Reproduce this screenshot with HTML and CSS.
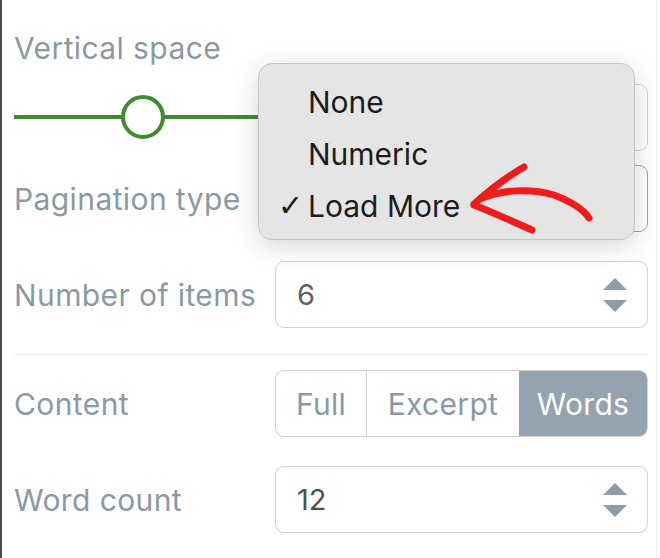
FILE: index.html
```html
<!DOCTYPE html>
<html lang="en">
<head>
    <meta charset="UTF-8">
    <meta name="viewport" content="width=device-width, initial-scale=1.0">
    <title>Post list settings</title>
    <link rel="stylesheet" href="styles.css">
</head>
<body>
    <div class="panel">
        <div class="label topLabel">Vertical space</div>
        <div class="sliderRow">
            <div class="slider">
                <div class="track"></div>
                <div class="thumb"></div>
            </div>
            <div class="box numBox"></div>
        </div>

        <div class="row">
            <div class="label">Pagination type</div>
            <div class="box focused"></div>
        </div>

        <div class="row">
            <div class="label">Number of items</div>
            <div class="box">
                <span class="value light">6</span>
                <span class="spin"><i class="up"></i><i class="down"></i></span>
            </div>
        </div>

        <hr class="divider">

        <div class="row">
            <div class="label">Content</div>
            <div class="segments">
                <span class="seg full">Full</span>
                <span class="seg excerpt">Excerpt</span>
                <span class="seg words active">Words</span>
            </div>
        </div>

        <div class="row">
            <div class="label">Word count</div>
            <div class="box">
                <span class="value">12</span>
                <span class="spin"><i class="up"></i><i class="down"></i></span>
            </div>
        </div>

        <!-- open select menu, over the rows -->
        <ul class="menu">
            <li>None</li>
            <li>Numeric</li>
            <li class="checked"><span class="check">✓</span>Load More</li>
        </ul>

        <svg class="arrow" width="150" height="100" viewBox="0 0 150 100">
            <path d="M72 17 C60 24 42 36 22 54" />
            <path d="M22 55 C40 62 62 72 80 80" />
            <path d="M30 48 C50 40 78 38 102 45 C120 52 132 60 137 68" />
        </svg>
    </div>
</body>
</html>
```

FILE: styles.css
```css
body {
    margin: 0;
    font-family: Inter, "Noto Sans", sans-serif;
    background: #fff;
}
.panel {
    position: relative;
    width: 657px;
    height: 558px;
    box-sizing: border-box;
    border-left: 2px solid #4a4a4a;
    border-right: 1px solid #ececec;
    padding: 32px 8px 0 12px;
    overflow: hidden;
}
.label {
    font-size: 30px;
    line-height: 32px;
    letter-spacing: 0.4px;
    color: #8b98a6;
    white-space: nowrap;
}
.topLabel {
    margin-bottom: 20px;
}
.sliderRow {
    display: flex;
    align-items: center;
    gap: 20px;
    height: 66px;
    margin-bottom: 15px;
}
.slider {
    position: relative;
    flex: 1;
    height: 44px;
    display: flex;
    align-items: center;
}
.track {
    width: 100%;
    height: 4px;
    background: #3f8b30;
}
.thumb {
    position: absolute;
    left: 107px;
    top: 0;
    width: 36px;
    height: 36px;
    border: 4px solid #3f8b30;
    border-radius: 50%;
    background: #fff;
}
.row {
    display: grid;
    grid-template-columns: 261px 1fr;
    align-items: center;
    margin-bottom: 29px;
}
.box {
    height: 67px;
    box-sizing: border-box;
    border: 1.5px solid #d3d3d3;
    border-radius: 9px;
    display: flex;
    align-items: center;
    justify-content: space-between;
    padding: 0 20px 0 21px;
}
.numBox {
    width: 120px;
}
.focused {
    border-color: #9da2a8;
}
.value {
    font-size: 29px;
    color: #4b5057;
}
.value.light {
    color: #5c6168;
}
.spin {
    display: flex;
    flex-direction: column;
    gap: 10px;
}
.spin i {
    display: block;
    width: 0;
    height: 0;
    border-left: 12px solid transparent;
    border-right: 12px solid transparent;
}
.spin .up {
    border-bottom: 12px solid #8d9cab;
}
.spin .down {
    border-top: 12px solid #8d9cab;
}
.divider {
    border: 0;
    border-top: 1.5px solid #eeeeee;
    margin: -3px 0 15px 0;
}
.segments {
    display: flex;
    height: 67px;
    box-sizing: border-box;
    border: 1.5px solid #d3d3d3;
    border-radius: 9px;
    overflow: hidden;
}
.seg {
    display: flex;
    align-items: center;
    justify-content: center;
    font-size: 30px;
    letter-spacing: 0.3px;
    color: #8b98a6;
}
.full {
    width: 90px;
    border-right: 1.5px solid #d3d3d3;
}
.excerpt {
    width: 152px;
}
.words {
    flex: 1;
}
.active {
    background: #95a3b1;
    color: #fff;
}
.menu {
    position: absolute;
    left: 256px;
    top: 63px;
    width: 377px;
    height: 177px;
    box-sizing: border-box;
    margin: 0;
    padding: 12px 0 0 49px;
    list-style: none;
    background: #e5e5e5;
    border: 1px solid #c6c6c6;
    border-radius: 14px;
    box-shadow: 0 6px 26px rgba(0, 0, 0, 0.16);
}
.menu li {
    position: relative;
    font-size: 30px;
    line-height: 52px;
    color: #1c1c1c;
}
.check {
    position: absolute;
    left: -30px;
    font-size: 30px;
    font-family: "DejaVu Sans", sans-serif;
}
.arrow {
    position: absolute;
    left: 450px;
    top: 150px;
    fill: none;
    stroke: #ee1c1c;
    stroke-width: 7;
    stroke-linecap: round;
}
```
